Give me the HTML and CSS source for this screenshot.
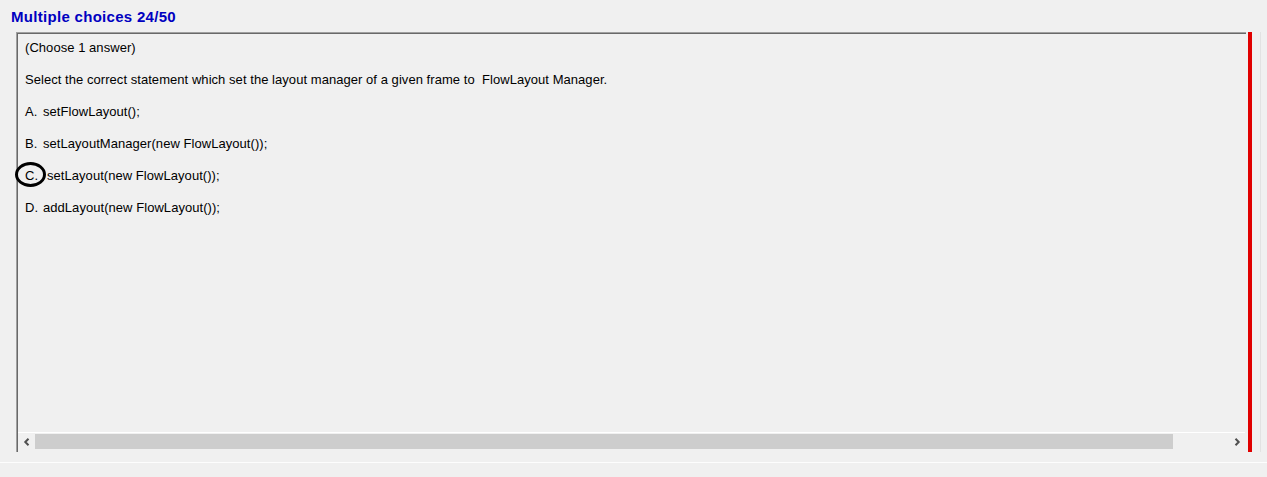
FILE: index.html
```html
<!DOCTYPE html>
<html>
<head>
<meta charset="utf-8">
<link rel="stylesheet" href="styles.css">
</head>
<body>
<div class="page">
  <div class="title">Multiple choices 24/50</div>
  <div class="main">
    <div class="box">
      <div class="content">
        <div class="line">(Choose 1 answer)</div>
        <div class="line">Select the correct statement which set the layout manager of a given frame to&nbsp; FlowLayout Manager.</div>
        <div class="line opt"><span class="lbl">A.</span><span>setFlowLayout();</span></div>
        <div class="line opt"><span class="lbl">B.</span><span>setLayoutManager(new FlowLayout());</span></div>
        <div class="line opt marked"><span class="lbl">C.</span><span>setLayout(new FlowLayout());</span><span class="circle"></span></div>
        <div class="line opt"><span class="lbl">D.</span><span>addLayout(new FlowLayout());</span></div>
      </div>
      <div class="hscroll">
        <div class="arrow">
          <svg width="8" height="8" viewBox="0 0 8 8"><path d="M5.5 0.8 L2.3 4 L5.5 7.2" fill="none" stroke="#505050" stroke-width="2"/></svg>
        </div>
        <div class="track"><div class="thumb"></div></div>
        <div class="arrow">
          <svg width="8" height="8" viewBox="0 0 8 8"><path d="M2.5 0.8 L5.7 4 L2.5 7.2" fill="none" stroke="#505050" stroke-width="2"/></svg>
        </div>
      </div>
    </div>
    <div class="redbar"></div>
    <div class="edge"></div>
  </div>
  <div class="footer"></div>
</div>
</body>
</html>
```
FILE: styles.css
```css
html, body {
  margin: 0;
  padding: 0;
  background: #f0f0f0;
  font-family: "Liberation Sans", Arial, sans-serif;
}
.page {
  width: 1267px;
  height: 477px;
  display: flex;
  flex-direction: column;
  overflow: hidden;
}
.title {
  height: 32px;
  box-sizing: border-box;
  padding: 8px 0 0 11px;
  font-size: 15px;
  line-height: 17px;
  font-weight: bold;
  letter-spacing: 0.3px;
  color: #0000c0;
}
.main {
  display: flex;
  height: 420px;
  padding-left: 16px;
}
.box {
  width: 1230px;
  box-sizing: border-box;
  border-top: 1px solid #a0a0a0;
  border-left: 1px solid #a0a0a0;
  box-shadow: inset 1px 1px 0 #696969;
  display: flex;
  flex-direction: column;
}
.content {
  flex: 1;
  padding: 7px 0 0 8px;
  display: flex;
  flex-direction: column;
  gap: 16px;
  font-size: 13px;
  letter-spacing: 0.05px;
  color: #000;
}
.line {
  height: 16px;
  line-height: 16px;
  white-space: pre;
}
.opt {
  display: flex;
  position: relative;
}
.lbl {
  width: 18px;
}
.marked .lbl {
  width: 22px;
}
.circle {
  position: absolute;
  left: -10px;
  top: -6px;
  width: 25px;
  height: 19px;
  border: 3.5px solid #000;
  border-radius: 50%;
}
.hscroll {
  height: 17px;
  margin: 0 1px 2px 1px;
  display: flex;
  align-items: stretch;
  border-top: 1px solid #fff;
  background: #f0f0f0;
}
.arrow {
  width: 17px;
  display: flex;
  align-items: center;
  justify-content: center;
}
.track {
  flex: 1;
  display: flex;
  padding: 1px 0;
}
.thumb {
  width: 1138px;
  background: #cdcdcd;
}
.redbar {
  width: 4px;
  margin-left: 2px;
  background: #e00000;
}
.edge {
  width: 1px;
  margin-left: 8px;
  background: #e2e2e2;
}
.footer {
  margin-top: 10px;
  border-top: 1px solid #fdfdfd;
  flex: 1;
  background: #f0f0f0;
}
```
